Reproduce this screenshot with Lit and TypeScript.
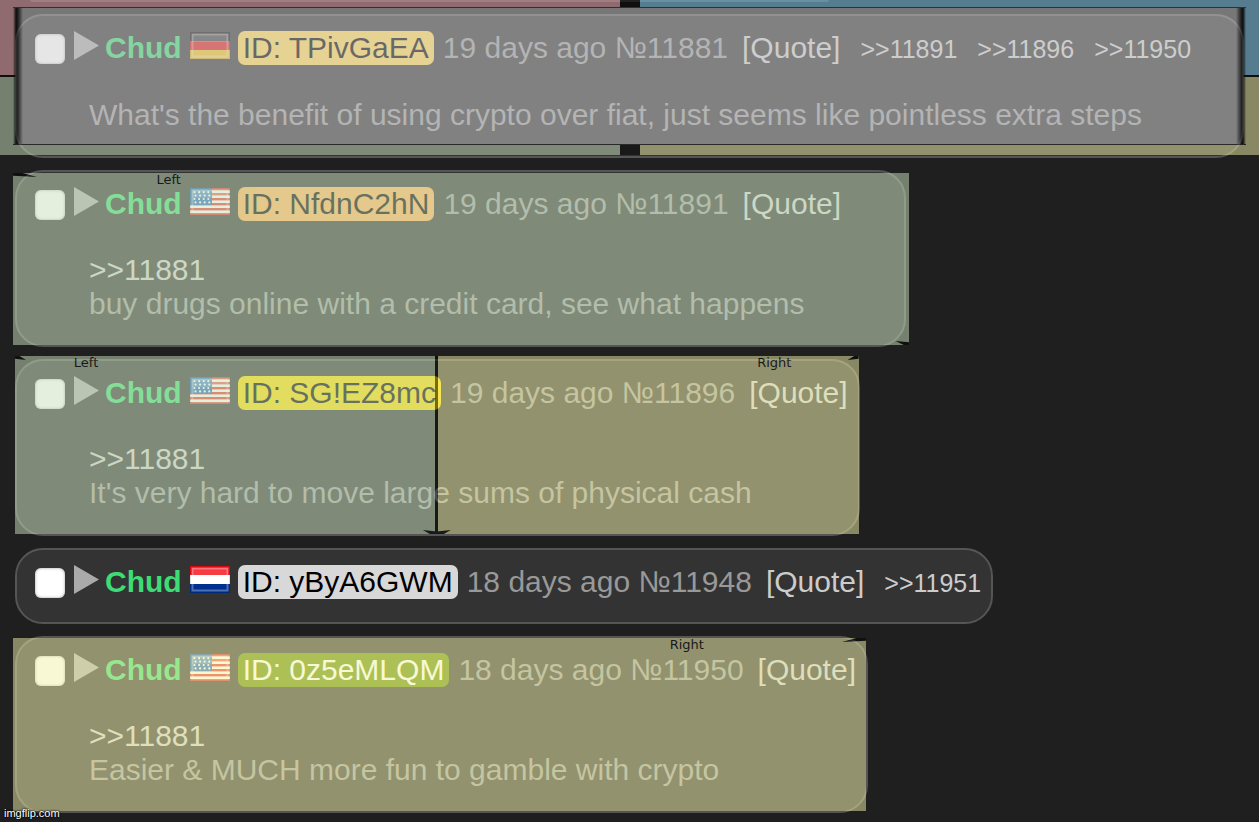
import { LitElement, html, css, svg, nothing } from "lit";
import { customElement, property } from "lit/decorators.js";

interface Post {
  no: string;
  flag: "de" | "us" | "nl";
  id: string;
  tone: string;
  age: string;
  replies: string[];
  quotes?: string;
  text?: string;
  tint?: "left" | "split" | "right";
}

const posts: Post[] = [
  {
    no: "11881", flag: "de", id: "TPivGaEA", tone: "gold", age: "19 days ago",
    replies: ["11891", "11896", "11950"],
    text: "What's the benefit of using crypto over fiat, just seems like pointless extra steps",
  },
  {
    no: "11891", flag: "us", id: "NfdnC2hN", tone: "orange", age: "19 days ago",
    replies: [], quotes: "11881", tint: "left",
    text: "buy drugs online with a credit card, see what happens",
  },
  {
    no: "11896", flag: "us", id: "SG!EZ8mc", tone: "yellow", age: "19 days ago",
    replies: [], quotes: "11881", tint: "split",
    text: "It's very hard to move large sums of physical cash",
  },
  {
    no: "11948", flag: "nl", id: "yByA6GWM", tone: "silver", age: "18 days ago",
    replies: ["11951"],
  },
  {
    no: "11950", flag: "us", id: "0z5eMLQM", tone: "green", age: "18 days ago",
    replies: [], quotes: "11881", tint: "right",
    text: "Easier & MUCH more fun to gamble with crypto",
  },
];

const stripes = (colors: string[], height: number) =>
  colors.map((c, i) => svg`<rect y=${i * height} width="40" height=${height} fill=${c}></rect>`);

const flagArt = {
  de: svg`${stripes(["#111", "#e01818", "#f0c020"], 9)}`,
  nl: svg`${stripes(["#f50a14", "#fff", "#00308f"], 9)}`,
  us: svg`
    <rect width="40" height="27" fill="#fff"></rect>
    ${[0, 1, 2, 3, 4, 5].map((i) => svg`<rect y=${i * 5} width="40" height="2.4" fill="#e5392f"></rect>`)}
    <rect width="22" height="17" fill="#2468bc"></rect>
    ${[0, 1, 2, 3].map((r) =>
      [0, 1, 2, 3].map((c) => svg`<circle cx=${4.5 + c * 4.6 + (r % 2)} cy=${4.2 + r * 3.4} r="1.1" fill="#fff"></circle>`))}`,
};

@customElement("thread-post")
export class ThreadPost extends LitElement {
  @property({ attribute: false }) post!: Post;

  static styles = css`
    :host { display: block; width: fit-content; max-width: 100%; }
    .card {
      position: relative;
      box-sizing: border-box;
      padding: 15px 10px 22px 18px;
      border: 2px solid #555;
      border-radius: 28px;
      background: #333;
      color: #999;
    }
    .head { display: flex; align-items: flex-start; }
    .tick {
      appearance: none;
      flex: none;
      width: 30px;
      height: 30px;
      margin: 3px 9px 0 0;
      border-radius: 6px;
      background: #fff;
      box-shadow: inset 0 0 3px #999;
    }
    .tick:checked { background: #7ab8ff; }
    .fold {
      flex: none;
      width: 25px;
      height: 29px;
      margin: 0 6px 0 0;
      padding: 0;
      border: 0;
      background: none;
      cursor: pointer;
    }
    .fold svg, .flag { display: block; }
    .name { color: #3ddc74; font-weight: bold; }
    .flag { flex: none; width: 40px; height: 27px; margin: 1px 8px 0; }
    .id { padding: 0 5px; border-radius: 7px; color: #000; }
    .gold { background: #ffd757; }
    .orange { background: #feae5a; }
    .yellow { background: #fad900; }
    .silver { background: #d8d8d8; }
    .green { background: #678f00; color: #fff; }
    .info { display: flex; align-items: baseline; margin-left: 9px; white-space: nowrap; }
    .stamp { margin-right: 14px; }
    a { color: #ccc; text-decoration: none; }
    .reply { margin-left: 20px; font-size: 25px; }
    .body { margin: 32px 90px 2px 54px; }
    .body p { margin: 0; }

    .tint { position: absolute; display: flex; opacity: 0.5; pointer-events: none; }
    .tint.left { inset: 1px -5px 0 -4px; }
    .tint.split { inset: -5px -1px 0 -2px; }
    .tint.right { inset: 0 0 0 -4px; }
    .zone { position: relative; flex: 1; }
    .zone.l { background: #cbe1bd; }
    .zone.r { background: #f1f1a9; }
    .divider { flex: none; width: 3px; background: #000; }
    .word {
      position: absolute;
      top: 0;
      color: #000;
      font: 13px/14px "DejaVu Sans", sans-serif;
    }
    .left .word { left: 16%; }
    .split .l .word { left: 14%; }
    .split .r .word { right: 16%; }
    .right .word { right: 19%; }
    .wedge { position: absolute; background: #000; }
    .tl { top: 0; left: 0; width: 24px; height: 4px; clip-path: polygon(0 0, 40% 0, 100% 100%, 0 70%); }
    .tr { top: 0; right: 0; width: 24px; height: 4px; clip-path: polygon(60% 0, 100% 0, 100% 70%, 0 100%); }
    .br { bottom: 0; right: 0; width: 14px; height: 4px; clip-path: polygon(0 0, 100% 30%, 100% 100%, 60% 100%); }
    .split .tl, .split .tr { width: 11px; }
    .right .tl { display: none; }
    .down { bottom: 0; left: calc(50% - 14px); width: 28px; height: 4px; clip-path: polygon(0 0, 50% 40%, 100% 0, 75% 100%, 25% 100%); }
  `;

  private renderTint(kind: Post["tint"]) {
    if (!kind) return nothing;
    return html`<div class="tint ${kind}">
      ${kind !== "right" ? html`<div class="zone l"><span class="word">Left</span><i class="wedge tl"></i></div>` : nothing}
      ${kind === "split" ? html`<div class="divider"></div>` : nothing}
      ${kind !== "left" ? html`<div class="zone r"><span class="word">Right</span><i class="wedge tr"></i></div>` : nothing}
      ${kind === "left" ? html`<i class="wedge br"></i>` : nothing}
      ${kind === "split" ? html`<i class="wedge down"></i>` : nothing}
    </div>`;
  }

  render() {
    const p = this.post;
    return html`<article class="card">
      <header class="head">
        <input class="tick" type="checkbox" aria-label="Select post ${p.no}" />
        <button class="fold" aria-label="Post menu">
          <svg width="25" height="29" viewBox="0 0 25 29"><path d="M0 0 25 14.5 0 29Z" fill="#aaa"></path></svg>
        </button>
        <span class="name">Chud</span>
        <svg class="flag" viewBox="0 0 40 27" role="img" aria-label=${p.flag}>
          ${flagArt[p.flag]}
          <rect x="2.5" y="2.5" width="35" height="22" fill="none" stroke="#fff" stroke-opacity=".3" stroke-width="2"></rect>
          <rect x="2" y="2" width="36" height="8" fill="#fff" fill-opacity=".2"></rect>
          <rect x=".5" y=".5" width="39" height="26" fill="none" stroke="#000" stroke-opacity=".12"></rect>
        </svg>
        <span class="id ${p.tone}">ID: ${p.id}</span>
        <div class="info">
          <span class="stamp">${p.age} №${p.no}</span>
          <a href="#quote">[Quote]</a>
          ${p.replies.map((r) => html`<a class="reply" href="#${r}">&gt;&gt;${r}</a>`)}
        </div>
      </header>
      ${p.text
        ? html`<div class="body">
            ${p.quotes ? html`<a href="#${p.quotes}">&gt;&gt;${p.quotes}</a>` : nothing}
            <p>${p.text}</p>
          </div>`
        : nothing}
      ${this.renderTint(p.tint)}
    </article>`;
  }
}

@customElement("app-root")
export class AppRoot extends LitElement {
  static styles = css`
    :host {
      display: block;
      position: relative;
      min-height: 100vh;
      overflow: hidden;
      background: #1f1f1f;
      font: 30px/34px "Liberation Sans", Arial, sans-serif;
    }
    .thread { display: flex; flex-direction: column; gap: 12px; padding: 0 15px 10px; }
    .previous { width: 65%; height: 2px; margin-left: 15px; background: #444; border-radius: 0 0 20px 20px; }
    .compass {
      position: absolute;
      top: 0;
      left: 0;
      right: 0;
      height: 155px;
      display: grid;
      grid-template-columns: 1fr 20px 1fr;
      grid-template-rows: 75px 2px 1fr;
      background: #000;
      opacity: 0.5;
      pointer-events: none;
    }
    .red { background: #ffb6be; }
    .blue { background: #8dd9ff; grid-column: 3; }
    .sage { background: #cbe1bd; grid-row: 3; }
    .olive { background: #f1f1a9; grid-row: 3; grid-column: 3; }
    .centre {
      position: absolute;
      inset: 7px 13px 10px;
      background: linear-gradient(90deg, transparent, #000 3px, #222 5px, #cfcfcf 10px, #cfcfcf calc(100% - 10px), #222 calc(100% - 5px), #000 calc(100% - 3px), transparent);
      border-top: 1px solid #444;
      border-bottom: 1px solid #222;
      box-sizing: border-box;
    }
    .mark {
      position: absolute;
      left: 4px;
      bottom: 3px;
      color: #fff;
      font-size: 11px;
      line-height: 13px;
      text-shadow: 0 0 2px #000, 0 0 2px #000;
    }
  `;

  render() {
    return html`
      <main class="thread">
        <div class="previous"></div>
        ${posts.map((p) => html`<thread-post .post=${p}></thread-post>`)}
      </main>
      <div class="compass">
        <div class="red"></div>
        <div class="blue"></div>
        <div class="sage"></div>
        <div class="olive"></div>
        <div class="centre"></div>
      </div>
      <span class="mark">imgflip.com</span>
    `;
  }
}
